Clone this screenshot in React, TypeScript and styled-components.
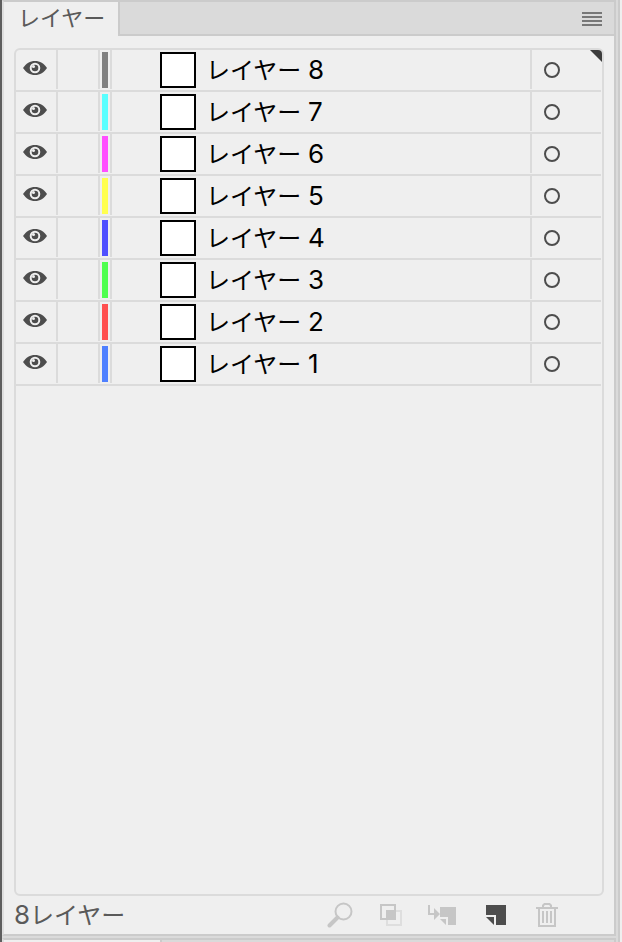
import React, { useState } from "react";
import styled, { createGlobalStyle } from "styled-components";

const line = "#dbdbdb";
const edge = "#cbcbcb";
const face = "#efefef";
const bar = "#dadada";
const ink = "#4d4d4d";

const GlobalStyle = createGlobalStyle`
  * { box-sizing: border-box; }
  body {
    margin: 0;
    background: ${bar};
    font-family: "Liberation Sans", "Noto Sans CJK JP", sans-serif;
  }
  button {
    margin: 0;
    padding: 0;
    border: 0;
    background: none;
    color: inherit;
    font: inherit;
    cursor: pointer;
  }
  svg { display: block; }
`;

const Frame = styled.div`
  border-right: 2px solid ${face};
  border-left: 2px solid #5e5e5e;
`;

const Dock = styled.div`
  display: flex;
  flex-direction: column;
  gap: 2px;
  height: 100vh;
  min-height: 480px;
  padding-right: 2px;
  background: ${bar};
  border-right: 2px solid ${edge};
`;

const Panel = styled.section`
  flex: 1;
  min-height: 0;
  display: flex;
  flex-direction: column;
  border: 2px solid ${edge};
  border-left-color: #dedede;
  background: ${face};
`;

const TabBar = styled.header`
  display: flex;
  align-items: stretch;
  height: 34px;
  flex: none;
`;

const Tab = styled.button`
  flex: none;
  width: 116px;
  padding: 0 0 0 14px;
  border-right: 2px solid ${edge};
  color: #5a5a5a;
  font-size: 22px;
  line-height: 34px;
  text-align: left;
  white-space: nowrap;
`;

const TabRest = styled.div`
  flex: 1;
  display: flex;
  justify-content: flex-end;
  align-items: center;
  padding: 2px 12px 0 0;
  background: ${bar};
  border-bottom: 2px solid ${edge};
`;

const LayerList = styled.ul`
  position: relative;
  flex: 1;
  min-height: 0;
  margin: 12px 10px 0;
  padding: 0;
  border: 2px solid ${line};
  border-radius: 6px;
  list-style: none;
  overflow: auto;
`;

const Corner = styled.li`
  position: absolute;
  top: 0;
  right: 0;
`;

const LayerRow = styled.li`
  display: flex;
  height: 42px;
  padding-bottom: 1px;
  margin-right: 1px;
  border-bottom: 2px solid ${line};
`;

const Cell = styled.div<{ $width: number }>`
  flex: none;
  width: ${(p) => p.$width}px;
  border-right: 2px solid ${line};
`;

const EyeButton = styled.button`
  display: flex;
  width: 38px;
  height: 36px;
  align-items: center;
  justify-content: center;
`;

const Swatch = styled.div<{ $color: string }>`
  width: 6px;
  height: 36px;
  margin: 2px;
  background: ${(p) => p.$color};
`;

const NameButton = styled.button`
  flex: 1;
  min-width: 0;
  display: flex;
  align-items: center;
  gap: 10px;
  padding-left: 48px;
  color: #000;
  font-size: 24px;
  line-height: 38px;
  text-align: left;
  white-space: nowrap;
`;

const Thumbnail = styled.span`
  flex: none;
  width: 36px;
  height: 36px;
  margin-top: 1px;
  border: 2px solid #000;
  background: #fff;
`;

const LayerName = styled.span`
  padding-top: 2px;
`;

const Digit = styled.span`
  font-family: Inter, sans-serif;
  font-size: 26px;
`;

const TargetCell = styled.div`
  flex: none;
  display: flex;
  align-items: center;
  width: 71px;
  padding-left: 12px;
  border-left: 2px solid ${line};
`;

const Target = styled.button`
  width: 16px;
  height: 16px;
  border: 2px solid ${ink};
  border-radius: 50%;
`;

const Footer = styled.footer`
  flex: none;
  display: flex;
  justify-content: space-between;
  align-items: center;
  height: 38px;
  padding: 0 54px 0 10px;
  color: #5a5a5a;
  font-size: 24px;
  line-height: 36px;
`;

const Tools = styled.div`
  display: flex;
  align-items: center;
`;

const Tool = styled.button<{ $active?: boolean }>`
  width: 52px;
  height: 28px;
  color: ${(p) => (p.$active ? ink : "#c6c6c6")};

  svg { margin: 0 auto; }
  &:last-child { width: 24px; margin-left: 14px; }
`;

const NextPanel = styled.div`
  flex: none;
  display: flex;
  height: 4px;
  border: 2px solid ${edge};
  border-bottom: 0;
  border-left-color: #dedede;
  background: ${bar};
`;

const NextTab = styled.div`
  width: 158px;
  background: ${face};
  border-right: 2px solid ${edge};
`;

const layers = [
  { id: 8, color: "#808080" },
  { id: 7, color: "#59ffff" },
  { id: 6, color: "#ff4fff" },
  { id: 5, color: "#ffff4f" },
  { id: 4, color: "#4f4fff" },
  { id: 3, color: "#4fff4f" },
  { id: 2, color: "#ff4f4f" },
  { id: 1, color: "#4f80ff" },
];

const Eye = () => (
  <svg width="24" height="16" viewBox="0 0 24 16" aria-hidden="true">
    <path d="M0 8C3 3.500 7 1 12 1s9 2.500 12 7c-3 4.500-7 7-12 7S3 12.500 0 8z" fill={ink} />
    <circle cx="12" cy="8" r="4.300" fill={ink} stroke={face} strokeWidth="2" />
    <circle cx="10.500" cy="6.500" r="1.500" fill={face} />
  </svg>
);

const MenuIcon = () => (
  <svg width="20" height="14" viewBox="0 0 20 14" aria-hidden="true">
    <path d="M0 1h20M0 5h20M0 9h20M0 13h20" stroke="#777" strokeWidth="2" />
  </svg>
);

const SearchIcon = () => (
  <svg width="26" height="26" viewBox="0 0 26 26" fill="none" stroke="currentColor" aria-hidden="true">
    <circle cx="16.500" cy="9.500" r="8" strokeWidth="2" />
    <path d="M10.500 15.500L2.500 23.500" strokeWidth="4" strokeLinecap="round" />
  </svg>
);

const MaskIcon = () => (
  <svg width="24" height="22" viewBox="0 0 24 22" fill="none" aria-hidden="true">
    <rect x="7" y="7" width="14" height="14" stroke="#dedede" strokeWidth="2" />
    <rect x="1" y="1" width="14" height="14" stroke="currentColor" strokeWidth="2" />
    <path d="M6 6h10v10H6z" fill="currentColor" />
  </svg>
);

const SublayerIcon = () => (
  <svg width="32" height="20" viewBox="0 0 32 20" aria-hidden="true">
    <path d="M1 0v9h6" fill="none" stroke="currentColor" strokeWidth="2" />
    <path d="M6 3l6 6-6 6zM12 2h16v18h-8v-8h-8zM12 14h6v6z" fill="currentColor" />
  </svg>
);

const NewLayerIcon = () => (
  <svg width="20" height="20" viewBox="0 0 20 20" fill="currentColor" aria-hidden="true">
    <path d="M0 0h20v20H10V10H0zM0 12h8v8z" />
  </svg>
);

const TrashIcon = () => (
  <svg width="24" height="24" viewBox="0 0 24 24" fill="none" stroke="currentColor" aria-hidden="true">
    <path d="M0 5h22M3 6v17h16V6M7 4V2.500L8.500 1h5L15 2.500V4" strokeWidth="2" />
    <path d="M7 8v12M11 8v12M15 8v12" strokeWidth="2" />
  </svg>
);

export default function App() {
  const [hidden, setHidden] = useState<number[]>([]);
  const toggle = (id: number) =>
    setHidden((h) => (h.includes(id) ? h.filter((n) => n !== id) : [...h, id]));

  return (
    <Frame lang="ja">
      <GlobalStyle />
      <Dock>
        <Panel>
          <TabBar>
            <Tab>レイヤー</Tab>
            <TabRest>
              <button aria-label="パネルメニュー"><MenuIcon /></button>
            </TabRest>
          </TabBar>
          <LayerList>
            {layers.map(({ id, color }) => (
              <LayerRow key={id}>
                <Cell $width={42}>
                  <EyeButton
                    aria-label={`レイヤー ${id} の表示`}
                    aria-pressed={!hidden.includes(id)}
                    onClick={() => toggle(id)}
                  >
                    {!hidden.includes(id) && <Eye />}
                  </EyeButton>
                </Cell>
                <Cell $width={42} />
                <Cell $width={12}><Swatch $color={color} /></Cell>
                <NameButton>
                  <Thumbnail />
                  <LayerName>レイヤー <Digit>{id}</Digit></LayerName>
                </NameButton>
                <TargetCell>
                  <Target aria-label={`レイヤー ${id} をターゲット`} />
                </TargetCell>
              </LayerRow>
            ))}
            <Corner aria-hidden="true">
              <svg width="12" height="12" viewBox="0 0 12 12">
                <path d="M0 0h12v12z" fill="#3c3c3c" />
              </svg>
            </Corner>
          </LayerList>
          <Footer>
            <span><Digit>{layers.length}</Digit>レイヤー</span>
            <Tools>
              <Tool aria-label="オブジェクトの位置"><SearchIcon /></Tool>
              <Tool aria-label="クリッピングマスクを作成"><MaskIcon /></Tool>
              <Tool aria-label="新規サブレイヤーを作成"><SublayerIcon /></Tool>
              <Tool aria-label="新規レイヤーを作成" $active><NewLayerIcon /></Tool>
              <Tool aria-label="選択項目を削除"><TrashIcon /></Tool>
            </Tools>
          </Footer>
        </Panel>
        <NextPanel><NextTab /></NextPanel>
      </Dock>
    </Frame>
  );
}
